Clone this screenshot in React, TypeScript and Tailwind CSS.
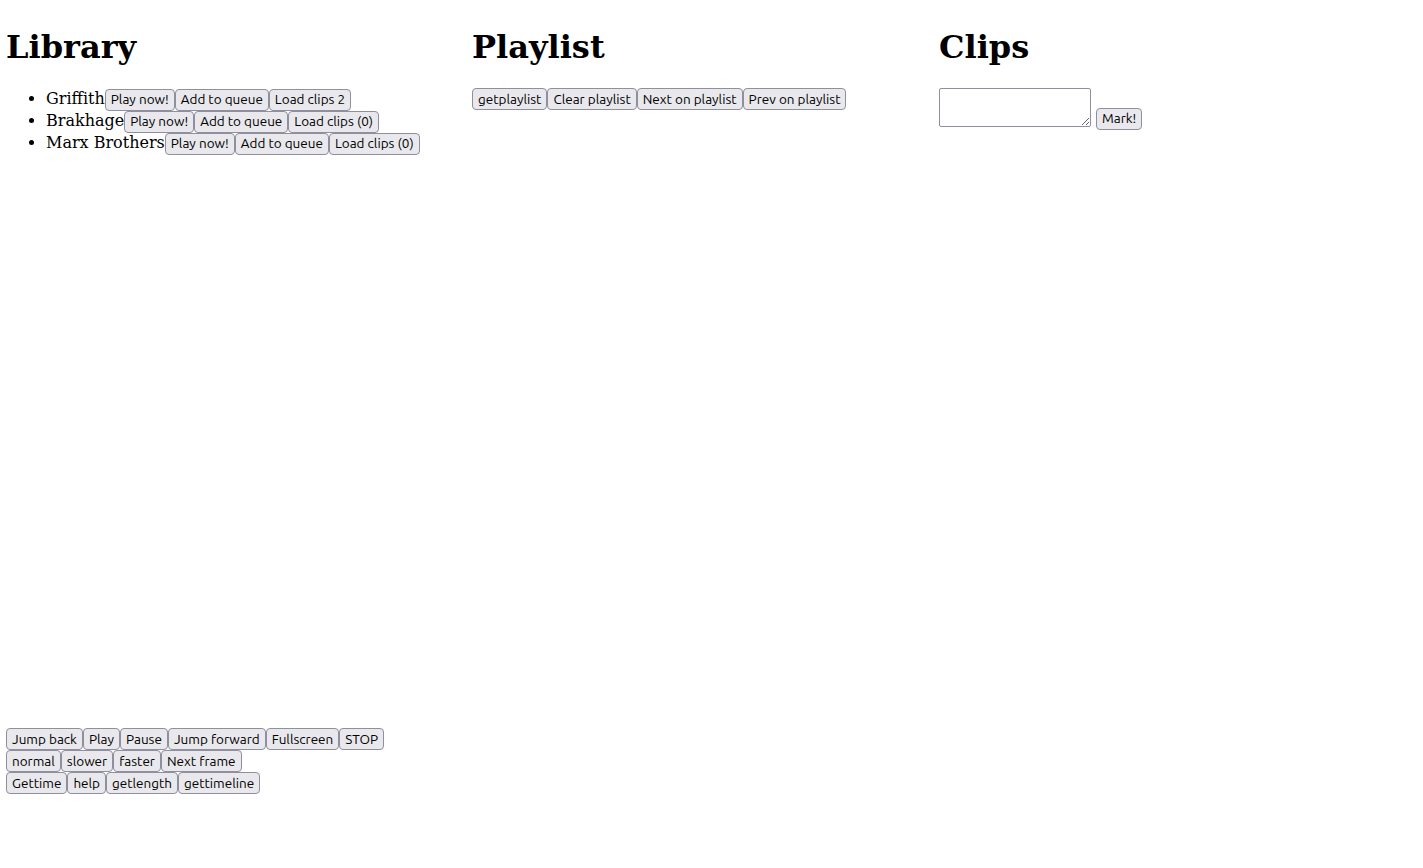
import React from "react";

const Btn = ({ children }: { children: React.ReactNode }) => (
  <button className="inline-block h-[22px] px-[5px] align-baseline bg-[#e9e9ed] border border-[#8f8f9d] rounded-[4px] text-[13.5px] leading-[19px] text-black font-['Ubuntu','Noto_Sans',sans-serif]">
    {children}
  </button>
);

const Row = ({ items }: { items: string[] }) => (
  <div className="flex h-[22px]">
    {items.map((t) => (
      <Btn key={t}>{t}</Btn>
    ))}
  </div>
);

export default function App() {
  const library = [
    { name: "Griffith", clips: "Load clips 2" },
    { name: "Brakhage", clips: "Load clips (0)" },
    { name: "Marx Brothers", clips: "Load clips (0)" },
  ];
  return (
    <div className="min-h-[868px] bg-white px-[6px] text-black font-['DejaVu_Serif',serif]">
      <div className="flex pt-[29px]">
        <div className="w-[466px]">
          <h1 className="text-[32px] font-bold leading-[37px] font-['DejaVu_Serif',serif]">Library</h1>
          <ul className="mt-[22px] pl-[40px] list-disc text-[16px]">
            {library.map((l) => (
              <li key={l.name} className="h-[22px] leading-[22px]">
                {l.name}
                <Btn>Play now!</Btn>
                <Btn>Add to queue</Btn>
                <Btn>{l.clips}</Btn>
              </li>
            ))}
          </ul>
        </div>
        <div className="w-[466px]">
          <h1 className="text-[32px] font-bold leading-[37px] font-['DejaVu_Serif',serif]">Playlist</h1>
          <div className="mt-[22px]">
            <Row items={["getplaylist", "Clear playlist", "Next on playlist", "Prev on playlist"]} />
          </div>
        </div>
        <div className="flex-1">
          <h1 className="text-[32px] font-bold leading-[37px] pl-[1px] font-['DejaVu_Serif',serif]">Clips</h1>
          <div className="mt-[22px] flex items-end gap-[5px]">
            <textarea className="w-[152px] h-[39px] border border-[#8f8f9d] rounded-[2px] ml-[1px] resize-y bg-white" />
            <div className="mb-[-3px]">
              <Btn>Mark!</Btn>
            </div>
          </div>
        </div>
      </div>
      <div className="mt-[574px]">
        <Row items={["Jump back", "Play", "Pause", "Jump forward", "Fullscreen", "STOP"]} />
        <Row items={["normal", "slower", "faster", "Next frame"]} />
        <Row items={["Gettime", "help", "getlength", "gettimeline"]} />
      </div>
    </div>
  );
}
